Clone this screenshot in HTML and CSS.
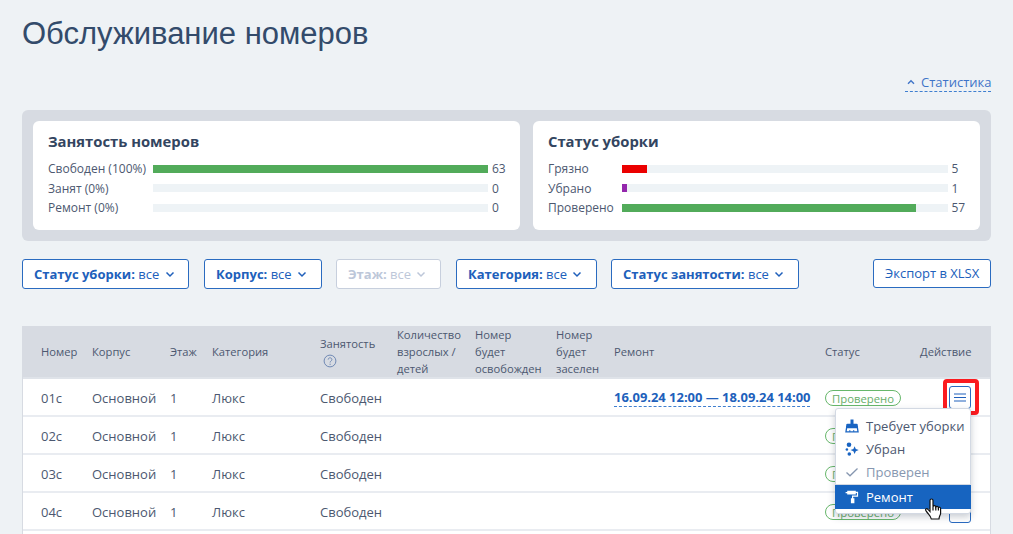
FILE: index.html
```html
<!DOCTYPE html>
<html lang="ru">
<head>
    <meta charset="UTF-8">
    <meta name="viewport" content="width=device-width, initial-scale=1.0">
    <title>Обслуживание номеров</title>
    <link rel="stylesheet" href="styles.css">
</head>
<body>
    <div class="page">
    <h1>Обслуживание номеров</h1>

    <div class="toggle">
        <a class="stat-link"><svg width="8" height="6" viewBox="0 0 8 6"><path d="M1 4.7 4 1.8l3 2.9"/></svg><span>Статистика</span></a>
    </div>

    <!-- statistics -->
    <div class="stats">
        <div class="card rooms">
            <h2>Занятость номеров</h2>
            <div class="line"><span>Свободен (100%)</span><div class="bar"><div class="fill green" style="width: 100%"></div></div><span>63</span></div>
            <div class="line"><span>Занят (0%)</span><div class="bar"></div><span>0</span></div>
            <div class="line"><span>Ремонт (0%)</span><div class="bar"></div><span>0</span></div>
        </div>
        <div class="card cleaning">
            <h2>Статус уборки</h2>
            <div class="line"><span>Грязно</span><div class="bar"><div class="fill red" style="width: 7.94%"></div></div><span>5</span></div>
            <div class="line"><span>Убрано</span><div class="bar"><div class="fill purple" style="width: 1.59%"></div></div><span>1</span></div>
            <div class="line"><span>Проверено</span><div class="bar"><div class="fill green" style="width: 90.48%"></div></div><span>57</span></div>
        </div>
    </div>

    <!-- filters -->
    <div class="filters">
        <button class="btn f-clean"><b>Статус уборки:</b> все <svg width="10" height="7" viewBox="0 0 10 7"><path d="M1.5 1.5 5 5l3.5-3.5"/></svg></button>
        <button class="btn f-building"><b>Корпус:</b> все <svg width="10" height="7" viewBox="0 0 10 7"><path d="M1.5 1.5 5 5l3.5-3.5"/></svg></button>
        <button class="btn f-floor disabled"><b>Этаж:</b> все <svg width="10" height="7" viewBox="0 0 10 7"><path d="M1.5 1.5 5 5l3.5-3.5"/></svg></button>
        <button class="btn f-category"><b>Категория:</b> все <svg width="10" height="7" viewBox="0 0 10 7"><path d="M1.5 1.5 5 5l3.5-3.5"/></svg></button>
        <button class="btn f-busy"><b>Статус занятости:</b> все <svg width="10" height="7" viewBox="0 0 10 7"><path d="M1.5 1.5 5 5l3.5-3.5"/></svg></button>
        <button class="btn export">Экспорт в XLSX</button>
    </div>

    <!-- rooms table -->
    <div class="table">
        <div class="row head">
            <div>Номер</div>
            <div>Корпус</div>
            <div>Этаж</div>
            <div>Категория</div>
            <div>Занятость
                <svg class="help" width="14" height="14" viewBox="0 0 14 14"><circle cx="7" cy="7" r="5.9"/><path d="M5.2 5.6c0-2.5 3.7-2.3 3.7 0 0 1.4-1.8 1.4-1.8 2.9M7.1 9.7v1.2"/></svg>
            </div>
            <div>Количество<br>взрослых /<br>детей</div>
            <div>Номер<br>будет<br>освобожден</div>
            <div>Номер<br>будет<br>заселен</div>
            <div>Ремонт</div>
            <div>Статус</div>
            <div class="action">Действие</div>
        </div>

        <div class="row">
            <div>01с</div><div>Основной</div><div>1</div><div>Люкс</div><div>Свободен</div>
            <div></div><div></div><div></div>
            <div><a class="repair">16.09.24 12:00 — 18.09.24 14:00</a></div>
            <div><span class="badge">Проверено</span></div>
            <div class="action">
                <button class="menu-btn marked"><svg width="12" height="9" viewBox="0 0 12 9"><path d="M0 1h12M0 4.5h12M0 8h12"/></svg></button>
                <div class="menu">
                    <div class="item">
                        <svg width="14" height="14" viewBox="0 0 14 14"><path d="M5.5.5h3v4.300h3q1.300 0 1.300 1.300v2H1.200v-2q0-1.300 1.300-1.300h3z"/><path d="M1.200 7h11.600l1 6.500H.2zM2.200 9.300l-.5 2.900h10.600l-.5-2.900z" fill-rule="evenodd"/><path d="M4.400 11h.9v2h-.9zM8.300 11h.9v2h-.9z"/></svg>
                        <span>Требует уборки</span>
                    </div>
                    <div class="item">
                        <svg width="14" height="14" viewBox="0 0 14 14"><circle cx="4" cy="2.700" r="2.300"/><circle cx="1.900" cy="7.500" r="1.300"/><circle cx="4.300" cy="12" r="1.800"/><path d="m9.600 4.200 1.200 2.700 2.900 1.200-2.900 1.200-1.200 2.700-1.200-2.700-2.900-1.200 2.900-1.200z"/></svg>
                        <span>Убран</span>
                    </div>
                    <div class="item muted">
                        <svg width="14" height="14" viewBox="0 0 14 14"><path class="check" d="m1.500 7.500 3.500 3.300 7.500-7.300"/></svg>
                        <span>Проверен</span>
                    </div>
                    <div class="item active">
                        <svg width="14" height="14" viewBox="0 0 14 14"><path d="M2.200.8h8.600v1h2.300v4.900H8.200v1.500h1.200v5.100H5.900V8.200H7V5.600h4.900V3h-1.100v1.500H2.200V3.300H.6V2h1.600z"/></svg>
                        <span>Ремонт</span>
                        <svg class="cursor" width="18" height="22" viewBox="0 0 18 22"><path d="M6 13.500V2.500c0-2 3-2 3 0v6.300c.3-1.600 2.600-1.400 2.800.2.500-1.200 2.400-.8 2.600.7.600-1 2.200-.6 2.200.8v4.700c0 2-1.600 3-1.600 5.800H7.300C6.800 18 4.600 16.700 2.200 13.200c-1.500-2.200.4-3.400 1.800-1.800z"/><path d="M9 8.800v3.700M11.800 9v3.500M14.400 9.700v2.800"/></svg>
                    </div>
                </div>
            </div>
        </div>
        <div class="row">
            <div>02с</div><div>Основной</div><div>1</div><div>Люкс</div><div>Свободен</div>
            <div></div><div></div><div></div><div></div>
            <div><span class="badge">Проверено</span></div>
            <div class="action"><button class="menu-btn"></button></div>
        </div>
        <div class="row">
            <div>03с</div><div>Основной</div><div>1</div><div>Люкс</div><div>Свободен</div>
            <div></div><div></div><div></div><div></div>
            <div><span class="badge">Проверено</span></div>
            <div class="action"><button class="menu-btn"></button></div>
        </div>
        <div class="row">
            <div>04с</div><div>Основной</div><div>1</div><div>Люкс</div><div>Свободен</div>
            <div></div><div></div><div></div><div></div>
            <div><span class="badge">Проверено</span></div>
            <div class="action"><button class="menu-btn"></button></div>
        </div>
    </div>
    </div>
</body>
</html>
```

FILE: styles.css
```css
*{
    margin: 0;
    padding: 0;
    box-sizing: border-box;
}

body{
    background-color: #eef2f5;
    font-family: "Open Sans", sans-serif;
    font-size: 13px;
    color: #4c5870;
}

.page{
    display: flex;
    flex-direction: column;
    height: 534px;
    padding: 14px 22px 0;
}

svg{
    fill: none;
    stroke: currentColor;
    flex-shrink: 0;
}

h1{
    font-family: "Liberation Sans", sans-serif;
    font-size: 31px;
    font-weight: 400;
    line-height: 40px;
    color: #334b6b;
}

.toggle{
    display: flex;
    justify-content: flex-end;
    margin-top: 19px;
    height: 37px;
}

.stat-link{
    display: flex;
    align-items: center;
    gap: 6px;
    width: 86px;
    height: 19px;
    padding-left: 2px;
    color: #3f74c8;
    border-bottom: 1px dashed #3f7fd0;
    white-space: nowrap;
}

.stat-link svg{
    stroke-width: 1.4;
}

/* statistics */
.stats{
    display: flex;
    gap: 13px;
    height: 131px;
    padding: 11px;
    background-color: #d7dbe2;
    border-radius: 6px;
}

.card{
    background-color: #fff;
    border-radius: 6px;
    height: 109px;
    padding: 10px 0 0 15px;
}

.rooms{
    width: 487px;
}

.cleaning{
    width: 447px;
}

.card h2{
    font-size: 14.8px;
    line-height: 20px;
    font-weight: 700;
    color: #334560;
    margin-bottom: 8px;
}

.line{
    display: grid;
    grid-template-columns: 105px 335px auto;
    align-items: center;
    height: 19.5px;
    font-size: 12px;
    white-space: nowrap;
}

.cleaning .line{
    grid-template-columns: 73.5px 326px auto;
}

.line span:last-child{
    padding-left: 4px;
}

.bar{
    height: 8px;
    background-color: #eef3f6;
}

.fill{
    height: 8px;
}

.green{
    background-color: #52ab5a;
}

.red{
    background-color: #eb0000;
}

.purple{
    background-color: #9427ac;
}

/* filters */
.filters{
    display: flex;
    margin-top: 18px;
    height: 67px;
}

.btn{
    display: flex;
    align-items: center;
    height: 30px;
    padding: 0 0 1px 11px;
    margin-right: 15px;
    background-color: #fff;
    border: 1px solid #2a6bc0;
    border-radius: 3px;
    color: #2060bb;
    font-family: inherit;
    font-size: 13px;
    white-space: pre;
}

.btn svg{
    stroke-width: 1.5;
    margin: 1px 0 0 2px;
}

.f-clean{
    width: 167px;
}

.f-building{
    width: 118px;
    margin-right: 14px;
}

.f-floor{
    width: 105px;
}

.f-category{
    width: 141px;
    margin-right: 14px;
}

.f-busy{
    width: 188px;
}

.disabled{
    color: #bdc7d9;
    border-color: #c7cfdd;
}

.export{
    width: 118px;
    height: 29px;
    margin: 0 0 0 auto;
}

/* table */
.table{
    flex: 1;
    border: 1px solid #d7dbe2;
    border-width: 0 1px;
    background-color: #fff;
}

.row{
    display: grid;
    grid-template-columns: 51px 78px 42px 108px 77px 78px 81px 58px 211px 95px 1fr;
    align-items: center;
    height: 38px;
    padding: 1px 18px 0;
    border-bottom: 2px solid #e9ecf1;
    white-space: nowrap;
}

.head{
    height: 53px;
    padding-top: 0;
    background-color: #d7dbe2;
    border-bottom-color: #dfe3e9;
    font-size: 11.2px;
    line-height: 17px;
}

.help{
    display: block;
    margin: 2px 0 0 3px;
    color: #7089b4;
}

.repair{
    display: inline-block;
    height: 19px;
    line-height: 18px;
    font-size: 12.95px;
    font-weight: 700;
    color: #2060bb;
    border-bottom: 1px dashed #3f7fd0;
}

.badge{
    display: block;
    width: 76px;
    height: 16px;
    line-height: 15px;
    border: 1px solid #67b76b;
    border-radius: 8px;
    font-size: 11.3px;
    text-align: center;
    color: #67ae69;
}

.action{
    position: relative;
    display: flex;
    justify-content: flex-end;
}

.menu-btn{
    position: relative;
    display: flex;
    align-items: center;
    justify-content: center;
    width: 22px;
    height: 23px;
    margin: 0 1px 1px 0;
    background-color: #fff;
    border: 1px solid #2a6bc0;
    border-radius: 3px;
    color: #2060bb;
}

.head .action{
    padding-right: 1px;
}

.marked::after{
    content: "";
    position: absolute;
    inset: -8px -9px -7px -7px;
    border: 4px solid #fb1b1f;
    border-radius: 4px;
}

.menu{
    position: absolute;
    top: 22px;
    right: 1px;
    z-index: 2;
    width: 136px;
    height: 106px;
    padding-top: 6px;
    background-color: #fff;
    border: 1px solid #d3d9e3;
    border-radius: 3px;
    box-shadow: 0 3px 7px rgba(40, 55, 80, 0.25);
}

.item{
    position: relative;
    display: flex;
    align-items: center;
    gap: 7px;
    height: 23px;
    padding-left: 9px;
}

.item svg{
    color: #1964c2;
    fill: currentColor;
    stroke: none;
}

.item .check{
    fill: none;
    stroke: #8797b0;
    stroke-width: 1.3;
}

.muted{
    color: #8797b0;
}

.item.active{
    height: 25px;
    margin: 0 -1px;
    padding-left: 10px;
    background-color: #1764c0;
    border-top: 1px solid #d3d9e3;
    color: #fff;
}

.active svg{
    color: #fff;
}

.item .cursor{
    position: absolute;
    left: 89px;
    top: 13px;
    fill: #fff;
    stroke: #111;
    stroke-width: 1.2;
}
```
